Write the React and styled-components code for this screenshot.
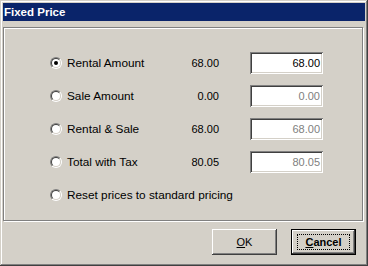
import React from "react";
import styled, { createGlobalStyle } from "styled-components";

const GlobalStyle = createGlobalStyle`
    html, body {
        margin: 0;
        padding: 0;
        background: #d4d0c8;
    }
    * {
        box-sizing: border-box;
    }
`;

const Window = styled.div`
    width: 368px;
    height: 266px;
    padding: 3px 3px 4px 3px;
    display: flex;
    flex-direction: column;
    background: #d4d0c8;
    box-shadow: inset -1px -1px 0 #404040, inset 1px 1px 0 #d4d0c8,
        inset -2px -2px 0 #808080, inset 2px 2px 0 #ffffff;
    font-family: "Liberation Sans", Arial, sans-serif;
`;

const TitleBar = styled.div`
    height: 18px;
    padding-left: 1px;
    display: flex;
    align-items: center;
    background: #0a246a;
    color: #ffffff;
    font-weight: bold;
    font-size: 11.5px;
`;

const GroupBox = styled.div`
    margin: 6px 2px 0 0;
    height: 194px;
    border: 1px solid #808080;
    box-shadow: 1px 1px 0 #ffffff, inset 1px 1px 0 #ffffff;
    display: flex;
    flex-direction: column;
    gap: 11px;
    padding: 24px 0 0 46px;
`;

const Row = styled.div`
    display: flex;
    align-items: center;
    height: 22px;
`;

const Option = styled.label`
    display: flex;
    align-items: center;
    gap: 5px;
    width: 141px;
    white-space: nowrap;
    font-size: 11.8px;
    color: #000;
`;

const RadioOuter = styled.span`
    width: 12px;
    height: 12px;
    flex: none;
    border-radius: 50%;
    border: 1px solid;
    border-color: #808080 #ffffff #ffffff #808080;
    display: flex;
`;

const RadioInner = styled.span`
    flex: 1;
    border-radius: 50%;
    border: 1px solid;
    border-color: #404040 #d4d0c8 #d4d0c8 #404040;
    background: #ffffff;
    display: flex;
    align-items: center;
    justify-content: center;

    &::after {
        content: "";
        width: 4px;
        height: 4px;
        border-radius: 50%;
        background: ${(props) => (props.checked ? "#000" : "transparent")};
    }
`;

const Amount = styled.div`
    width: 28px;
    text-align: right;
    font-size: 11px;
    color: #000;
`;

const ValueBox = styled.div`
    margin-left: 31px;
    width: 73px;
    height: 22px;
    padding: 0 3px 1px 0;
    display: flex;
    align-items: center;
    justify-content: flex-end;
    background: #ffffff;
    font-size: 11px;
    color: ${(props) => (props.disabled ? "#808080" : "#000")};
    box-shadow: inset 1px 1px 0 #808080, inset -1px -1px 0 #ffffff,
        inset 2px 2px 0 #404040, inset -2px -2px 0 #d4d0c8;
`;

const ButtonBar = styled.div`
    display: flex;
    justify-content: flex-end;
    gap: 14px;
    padding: 8px 9px 0 0;
`;

const Button = styled.button`
    width: 65px;
    height: 26px;
    padding: 0;
    border: ${(props) => (props.default ? "1px solid #000" : "none")};
    background: #d4d0c8;
    font-family: "Liberation Sans", Arial, sans-serif;
    font-size: 11px;
    font-weight: ${(props) => (props.default ? "bold" : "normal")};
    color: #000;
    box-shadow: inset -1px -1px 0 #404040, inset 1px 1px 0 #ffffff,
        inset -2px -2px 0 #808080, inset 2px 2px 0 #d4d0c8;
    display: flex;
    align-items: center;
    justify-content: center;

    .focus {
        display: flex;
        align-items: center;
        justify-content: center;
        width: 53px;
        height: 16px;
        border: 1px dotted #000;
    }
`;

const rows = [
    { label: "Rental Amount", amount: "68.00", value: "68.00", checked: true },
    { label: "Sale Amount", amount: "0.00", value: "0.00" },
    { label: "Rental & Sale", amount: "68.00", value: "68.00" },
    { label: "Total with Tax", amount: "80.05", value: "80.05" },
];

const Radio = ({ checked }) => (
    <RadioOuter>
        <RadioInner checked={checked} />
    </RadioOuter>
);

export default function App() {
    return (
        <>
            <GlobalStyle />
            <Window>
                <TitleBar>Fixed Price</TitleBar>
                <GroupBox>
                    {rows.map((el) => (
                        <Row key={el.label}>
                            <Option>
                                <Radio checked={el.checked} />
                                {el.label}
                            </Option>
                            <Amount>{el.amount}</Amount>
                            <ValueBox disabled={!el.checked}>{el.value}</ValueBox>
                        </Row>
                    ))}
                    <Row>
                        <Option>
                            <Radio />
                            Reset prices to standard pricing
                        </Option>
                    </Row>
                </GroupBox>
                <ButtonBar>
                    <Button>
                        <span><u>O</u>K</span>
                    </Button>
                    <Button default>
                        <span className="focus">
                            <span><u>C</u>ancel</span>
                        </span>
                    </Button>
                </ButtonBar>
            </Window>
        </>
    );
}
